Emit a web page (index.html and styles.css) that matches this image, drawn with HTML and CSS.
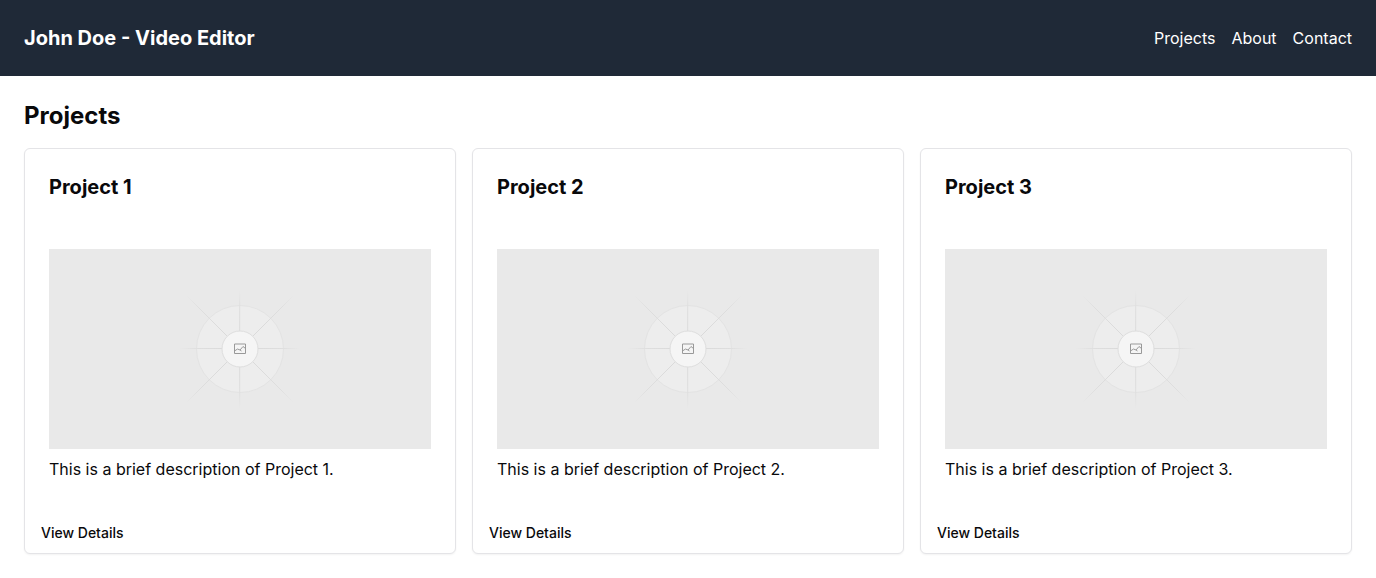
FILE: index.html
```html
<!DOCTYPE html>
<html lang="en">
<head>
<meta charset="utf-8">
<meta name="viewport" content="width=device-width, initial-scale=1">
<title>John Doe - Video Editor</title>
<link rel="stylesheet" href="styles.css">
</head>
<body>
<svg class="defs" width="0" height="0" aria-hidden="true">
  <defs>
    <radialGradient id="ray" gradientUnits="userSpaceOnUse" cx="70" cy="70" r="76">
      <stop offset="0" stop-color="#d8d8d8"/>
      <stop offset=".75" stop-color="#dedede"/>
      <stop offset="1" stop-color="#e9e9e9"/>
    </radialGradient>
    <radialGradient id="axis" gradientUnits="userSpaceOnUse" cx="70" cy="70" r="60">
      <stop offset="0" stop-color="#d8d8d8"/>
      <stop offset=".7" stop-color="#dedede"/>
      <stop offset="1" stop-color="#e9e9e9"/>
    </radialGradient>
    <symbol id="placeholder" viewBox="0 0 140 140">
      <circle cx="70" cy="70" r="43.5" fill="#ededed" stroke="#e3e3e3"/>
      <path d="M69.700 10V130M10 69.500H130" stroke="url(#axis)" fill="none"/>
      <path d="M16 16L124 124M124 16L16 124" stroke="url(#ray)" fill="none"/>
      <circle cx="70" cy="70" r="18" fill="#f5f5f5" stroke="#dedede"/>
      <path d="M64.5 65H75.5V74.5H64.5ZM64.5 72L67.5 70L70 71L73 67.5L75.5 69.500M70 71L71.500 72" stroke="#999999" fill="none"/>
    </symbol>
  </defs>
</svg>
<header class="site-header">
  <h1 class="site-title">John Doe - Video Editor</h1>
  <nav class="site-nav">
    <a href="#projects">Projects</a>
    <a href="#about">About</a>
    <a href="#contact">Contact</a>
  </nav>
</header>
<main class="main">
  <section id="projects">
    <h2 class="section-title">Projects</h2>
    <div class="project-grid">
      <article class="card">
        <h3 class="card-title">Project 1</h3>
        <div class="card-content">
          <div class="thumb" role="img" aria-label="Project 1"><svg class="thumb-art"><use href="#placeholder"/></svg></div>
          <p class="description">This is a brief description of Project 1.</p>
        </div>
        <button class="details" type="button">View Details</button>
      </article>
      <article class="card">
        <h3 class="card-title">Project 2</h3>
        <div class="card-content">
          <div class="thumb" role="img" aria-label="Project 2"><svg class="thumb-art"><use href="#placeholder"/></svg></div>
          <p class="description">This is a brief description of Project 2.</p>
        </div>
        <button class="details" type="button">View Details</button>
      </article>
      <article class="card">
        <h3 class="card-title">Project 3</h3>
        <div class="card-content">
          <div class="thumb" role="img" aria-label="Project 3"><svg class="thumb-art"><use href="#placeholder"/></svg></div>
          <p class="description">This is a brief description of Project 3.</p>
        </div>
        <button class="details" type="button">View Details</button>
      </article>
    </div>
  </section>
</main>
</body>
</html>
```
FILE: styles.css
```css
*,
*::before,
*::after {
  box-sizing: border-box;
}

body,
h1,
h2,
h3,
p {
  margin: 0;
}

body {
  background: #ffffff;
  color: #09090b;
  font-family: Inter, sans-serif;
  font-size: 16px;
  line-height: 24px;
}

.defs {
  position: absolute;
}

.site-header {
  display: flex;
  align-items: center;
  justify-content: space-between;
  padding: 24px;
  background: #1f2937;
  color: #ffffff;
}

.site-title,
.card-title {
  font-size: 20px;
  line-height: 28px;
  font-weight: 700;
}

.site-nav {
  display: flex;
  gap: 16px;
}

.site-nav a {
  color: inherit;
  text-decoration: none;
}

.main {
  padding: 24px;
}

.section-title {
  margin-bottom: 16px;
  font-size: 24px;
  line-height: 32px;
  font-weight: 700;
}

.project-grid {
  display: grid;
  grid-template-columns: repeat(auto-fit, minmax(300px, 1fr));
  gap: 16px;
}

.card {
  border: 1px solid #e4e4e7;
  border-radius: 6px;
  background: #ffffff;
  box-shadow: 0 1px 2px rgba(0, 0, 0, 0.05);
}

.card-title,
.card-content {
  padding: 24px;
}

.thumb {
  display: flex;
  align-items: center;
  justify-content: center;
  height: 200px;
  background: #e9e9e9;
}

.thumb-art {
  width: 140px;
  height: 140px;
}

.description {
  margin-top: 8px;
}

.details {
  display: block;
  height: 40px;
  margin-top: 8px;
  padding: 0 16px;
  border: 0;
  border-radius: 6px;
  background: transparent;
  color: inherit;
  font: 500 14px/20px Inter, sans-serif;
  cursor: pointer;
}
```
